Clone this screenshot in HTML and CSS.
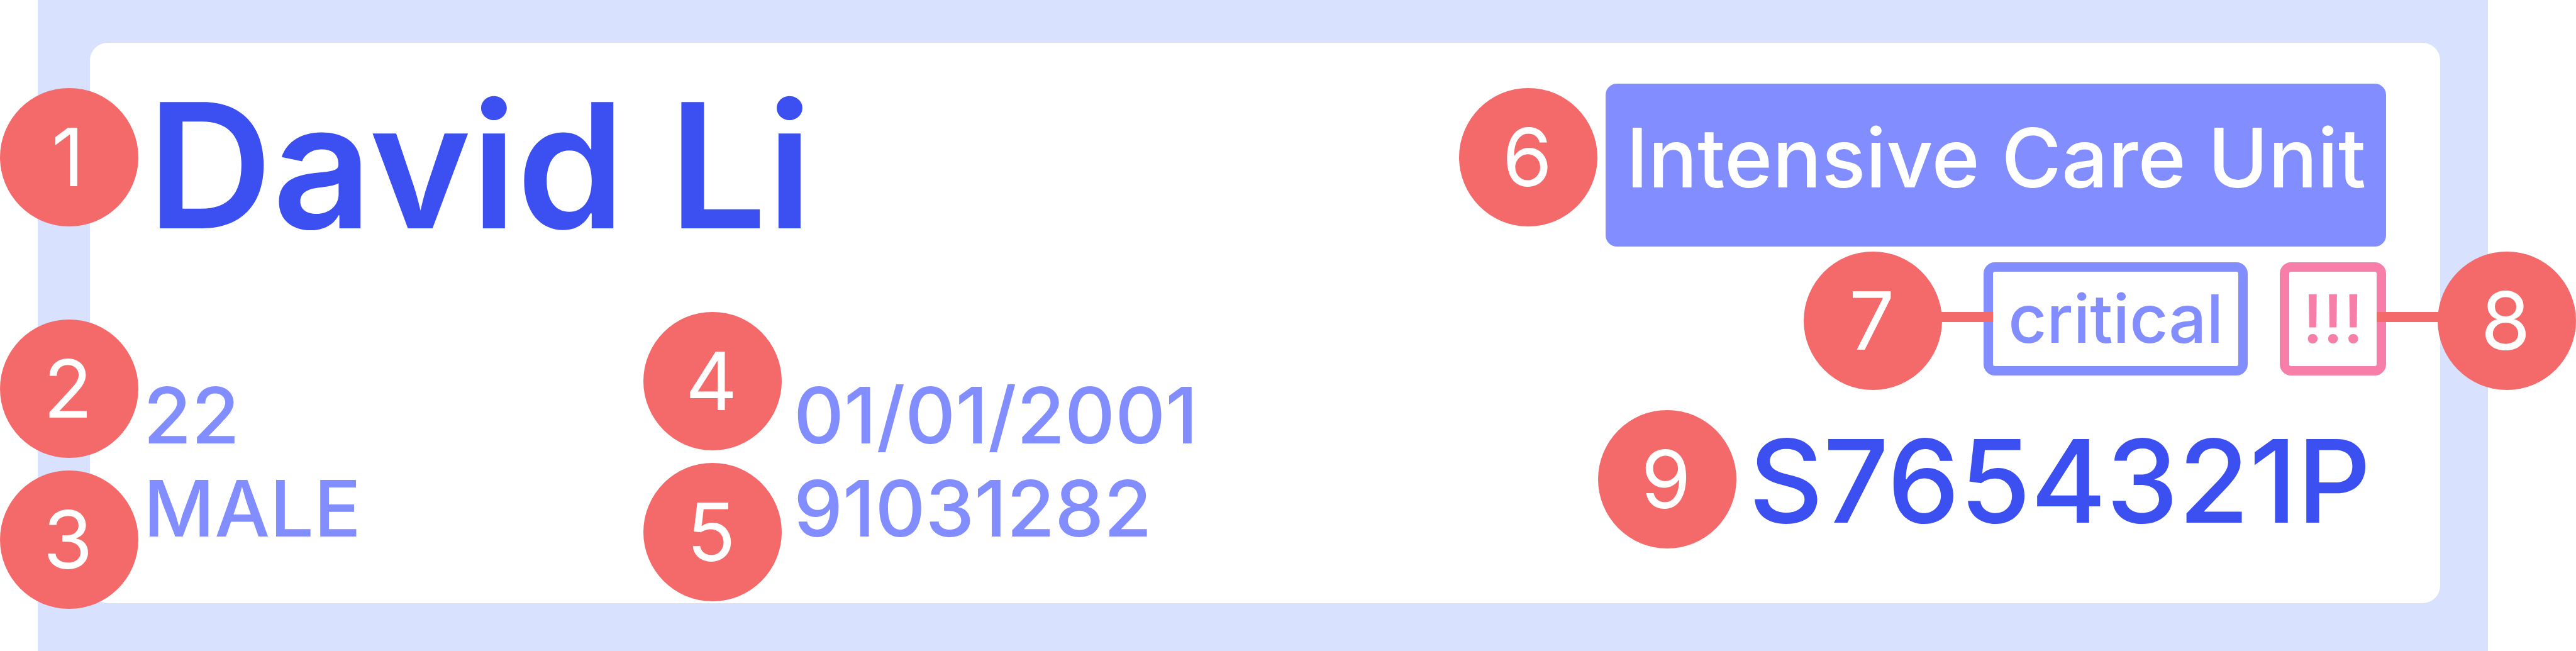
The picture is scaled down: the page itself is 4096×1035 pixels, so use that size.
FILE: index.html
```
<!DOCTYPE html>
<html lang="en">
<head>
<meta charset="utf-8">
<title>Patient card</title>
<link rel="stylesheet" href="styles.css">
</head>
<body>
<main class="frame">
  <article class="card">
    <section class="identity">
      <h1 class="field name"><span class="marker marker-name">1</span>David Li</h1>
      <div class="details">
        <p class="field detail"><span class="marker marker-age">2</span>22</p>
        <p class="field detail"><span class="marker marker-birth">4</span>01/01/2001</p>
        <p class="field detail"><span class="marker marker-sex">3</span>MALE</p>
        <p class="field detail"><span class="marker marker-phone">5</span>91031282</p>
      </div>
    </section>
    <section class="status">
      <p class="field unit"><span class="marker marker-unit">6</span>Intensive Care Unit</p>
      <div class="chips">
        <p class="field chip"><span class="marker marker-state">7</span><span class="lead lead-left"></span>critical</p>
        <p class="field chip chip-alert"><span class="marker marker-alert">8</span><span class="lead lead-right"></span>!!!</p>
      </div>
      <p class="field patient-id"><span class="marker marker-id">9</span>S7654321P</p>
    </section>
  </article>
</main>
</body>
</html>
```
FILE: styles.css
```
* {
  box-sizing: border-box;
}

body {
  margin: 0;
  background: #fff;
  font-family: Inter, "Liberation Sans", sans-serif;
  font-weight: 500;
}

h1,
p {
  margin: 0;
}

.frame {
  min-height: 100vh;
  margin: 0 140px 0 60px;
  padding: 68px 76px 76px 83px;
  background: #d8e2ff;
}

.card {
  display: flex;
  justify-content: space-between;
  padding: 65px 86px 77px 85px;
  border-radius: 28px;
  background: #fff;
}

.field {
  position: relative;
  white-space: nowrap;
}

.name {
  padding-left: 6px;
  color: #3c4ff0;
  font-size: 276px;
  font-weight: 600;
  line-height: 260px;
}

.details {
  display: grid;
  grid-template-columns: 1034px auto;
  margin-top: 193px;
}

.detail {
  color: #828dff;
  font-size: 124px;
  line-height: 148px;
}

.status {
  display: flex;
  flex-direction: column;
  align-items: flex-end;
}

.unit {
  padding: 0 32px 23px;
  border-radius: 18px;
  background: #828dff;
  color: #fff;
  font-size: 130px;
  line-height: 236px;
}

.chips {
  display: flex;
  gap: 51px;
  margin-top: 25px;
}

.chip {
  padding: 0 24px;
  border: 15px solid #828dff;
  border-radius: 18px;
  color: #828dff;
  font-size: 106px;
  line-height: 150px;
}

.chip-alert {
  padding: 0 21px;
  border-color: #f67ea9;
  color: #f67ea9;
}

.patient-id {
  margin-top: 58px;
  padding-right: 24px;
  color: #3c4ff0;
  font-size: 183px;
  line-height: 220px;
}

.marker {
  position: absolute;
  width: 220px;
  height: 220px;
  padding-right: 4px;
  border-radius: 50%;
  background: #f46a6b;
  color: #fff;
  font-size: 128px;
  font-weight: 400;
  line-height: 220px;
  text-align: center;
}

.marker-name {
  top: 7px;
  left: -228px;
}

.marker-age {
  top: -78px;
  left: -228px;
}

.marker-sex {
  top: 14px;
  left: -228px;
}

.marker-birth {
  top: -90px;
  left: -239px;
}

.marker-phone {
  top: 2px;
  left: -239px;
}

.marker-unit {
  top: 7px;
  left: -233px;
}

.marker-state {
  top: -32px;
  left: -301px;
}

.marker-alert {
  top: -32px;
  right: -317px;
}

.marker-id {
  top: -3px;
  right: 1033px;
}

.lead {
  position: absolute;
  top: 64px;
  height: 16px;
  background: #f46a6b;
}

.lead-left {
  left: -82px;
  width: 82px;
}

.lead-right {
  right: -98px;
  width: 98px;
}
```
